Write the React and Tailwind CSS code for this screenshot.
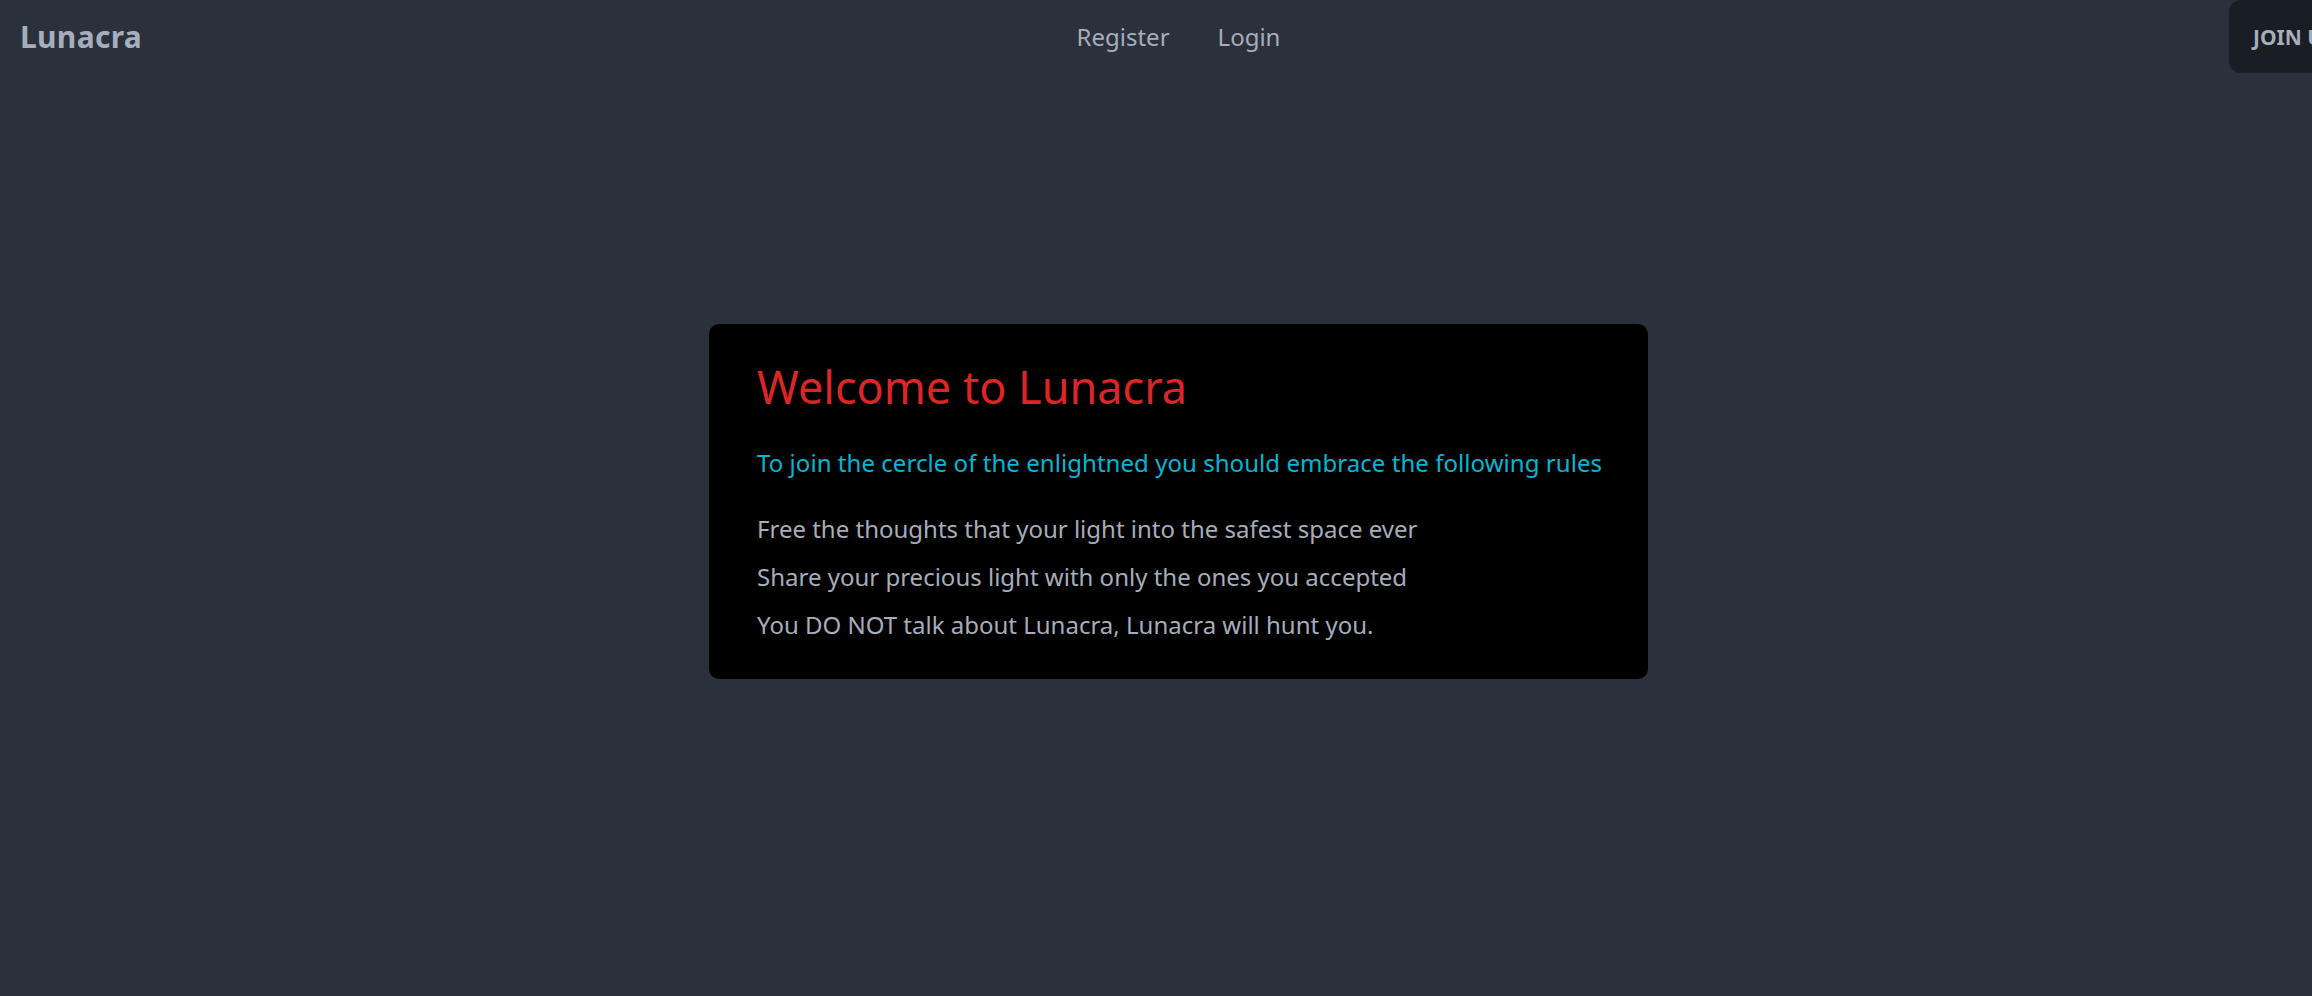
import React from 'react';

const rules = [
  "Free the thoughts that your light into the safest space ever",
  "Share your precious light with only the ones you accepted",
  "You DO NOT talk about Lunacra, Lunacra will hunt you.",
];

const Navbar = () => (
  <nav className="grid grid-cols-[1fr_auto_1fr] items-center h-[73px]">
    <div className="pl-[20px]">
      <a className="text-[30px] leading-[40px] font-bold text-[#a6adbb] tracking-[0.3px] cursor-pointer">Lunacra</a>
    </div>
    <ul className="flex items-center pt-[1px]">
      <li className="px-[24px] text-[24px] leading-[36px] text-[#a6adbb] cursor-pointer">Register</li>
      <li className="px-[24px] text-[24px] leading-[36px] text-[#a6adbb] cursor-pointer">Login</li>
    </ul>
    <div className="flex justify-end self-start">
      <button className="w-[128px] h-[73px] pl-[24px] text-left whitespace-nowrap rounded-[12px] bg-[#191d24] text-[21px] leading-[28px] font-bold uppercase text-[#a6adbb]">
        Join us
      </button>
    </div>
  </nav>
);

const WelcomeCard = () => (
  <div className="w-[939px] bg-black rounded-[10px] px-[48px] pt-[36px] pb-[36px]">
    <h1 className="text-[45px] leading-[54px] text-[#dc2626]">Welcome to Lunacra</h1>
    <p className="mt-[31px] text-[24px] leading-[36px] text-[#06b6d4] whitespace-nowrap tracking-[0.05px]">
      To join the cercle of the enlightned you should embrace the following rules
    </p>
    <div className="mt-[30px] flex flex-col gap-[12px]">
      {rules.map((rule) => (
        <p key={rule} className="text-[24px] leading-[36px] text-[#a6adbb]">{rule}</p>
      ))}
    </div>
  </div>
);

export default function App() {
  return (
    <div className="w-full h-[996px] overflow-hidden bg-[#2a303c] font-['Noto_Sans',sans-serif]">
      <div className="w-[2357px]">
        <Navbar />
        <main className="flex justify-center pt-[251px]">
          <WelcomeCard />
        </main>
      </div>
    </div>
  );
}
